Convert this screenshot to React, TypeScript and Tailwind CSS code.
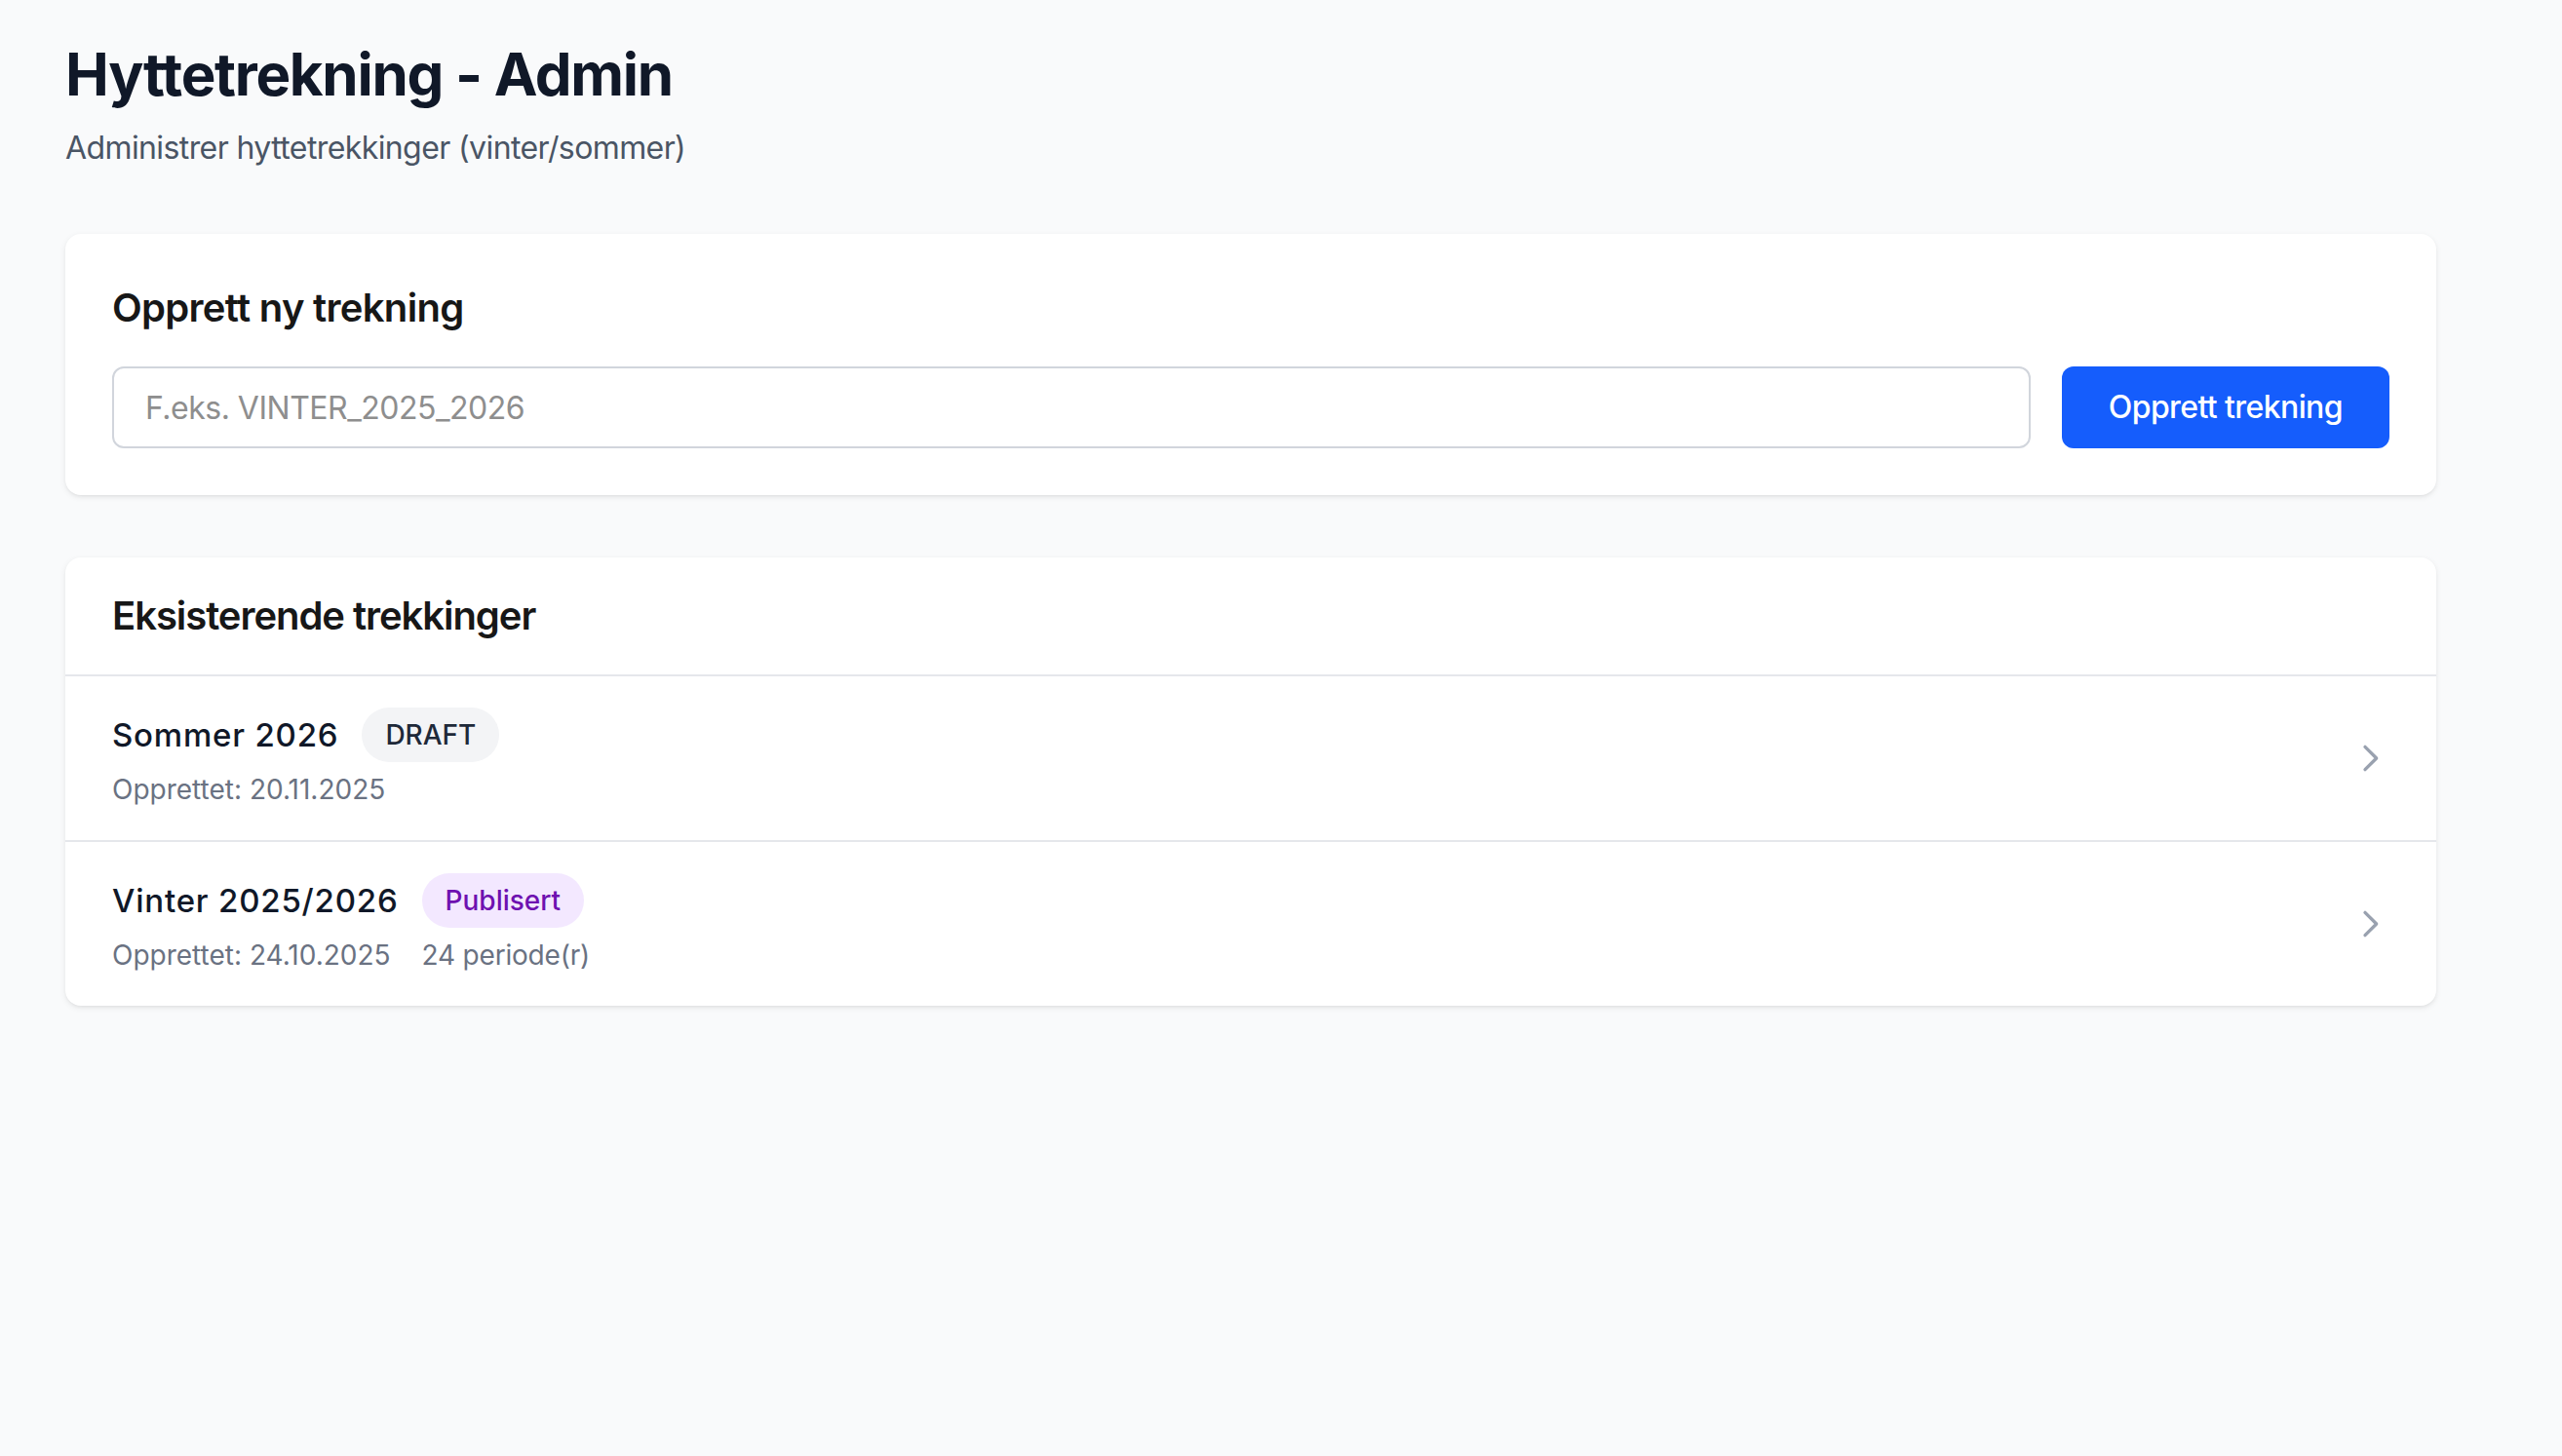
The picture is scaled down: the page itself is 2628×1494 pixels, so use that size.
import React from "react";

type Draw = {
  name: string;
  status: "DRAFT" | "Publisert";
  created: string;
  periods?: number;
};

const draws: Draw[] = [
  { name: "Sommer 2026", status: "DRAFT", created: "20.11.2025" },
  { name: "Vinter 2025/2026", status: "Publisert", created: "24.10.2025", periods: 24 },
];

function StatusBadge({ status }: { status: Draw["status"] }) {
  const tone =
    status === "Publisert"
      ? "bg-purple-100 text-purple-800"
      : "bg-gray-100 text-gray-800";
  return (
    <span
      className={`inline-flex items-center rounded-full px-[24px] py-[8px] text-[28px] leading-[40px] font-medium ${tone}`}
    >
      {status}
    </span>
  );
}

function ChevronRight() {
  return (
    <svg
      className="h-[40px] w-[40px] shrink-0 text-gray-400"
      viewBox="0 0 24 24"
      fill="none"
      stroke="currentColor"
      strokeWidth={2}
      strokeLinecap="round"
      strokeLinejoin="round"
    >
      <path d="M9 5l7 7-7 7" />
    </svg>
  );
}

function DrawRow({ draw }: { draw: Draw }) {
  return (
    <div className="flex items-center justify-between px-[48px] py-[32px]">
      <div>
        <div className="flex items-center gap-[24px]">
          <span className="text-[33px] leading-[48px] font-medium tracking-[0.8px] text-gray-900">
            {draw.name}
          </span>
          <StatusBadge status={draw.status} />
        </div>
        <div className="mt-[8px] flex gap-[32px] text-[28px] leading-[40px] text-gray-500">
          <span>Opprettet: {draw.created}</span>
          {draw.periods !== undefined && (
            <span className="tracking-[-0.2px]">{draw.periods} periode(r)</span>
          )}
        </div>
      </div>
      <ChevronRight />
    </div>
  );
}

const cardShadow =
  "shadow-[0_2px_6px_0_rgba(0,0,0,0.08),0_2px_4px_-2px_rgba(0,0,0,0.08)]";

export default function App() {
  return (
    <div
      className="min-h-screen bg-gray-50 pt-[40px] pb-[64px]"
      style={{ fontFamily: "Inter, 'Noto Sans', sans-serif" }}
    >
      <div className="ml-[67px] w-[2432px]">
        <h1 className="text-[60px] leading-[72px] font-bold tracking-[-1.3px] text-gray-900">
          Hyttetrekning - Admin
        </h1>
        <p className="mt-[16px] text-[32px] leading-[48px] tracking-[-0.6px] text-gray-600">
          Administrer hyttetrekkinger (vinter/sommer)
        </p>

        <section className={`mt-[64px] rounded-[16px] bg-white p-[48px] ${cardShadow}`}>
          <h2 className="mb-[32px] text-[40px] leading-[56px] font-semibold tracking-[-0.7px] text-neutral-900">
            Opprett ny trekning
          </h2>
          <div className="flex gap-[32px]">
            <input
              type="text"
              placeholder="F.eks. VINTER_2025_2026"
              className="h-[84px] flex-1 rounded-[12px] border-2 border-gray-300 bg-white px-[32px] text-[32px] tracking-[-0.5px] text-gray-900 outline-none placeholder:text-[#8e8e8e]"
            />
            <button className="h-[84px] rounded-[12px] bg-blue-600 px-[48px] text-[32px] font-medium tracking-[-0.6px] text-white">
              Opprett trekning
            </button>
          </div>
        </section>

        <section className={`mt-[64px] overflow-hidden rounded-[16px] bg-white ${cardShadow}`}>
          <div className="border-b-2 border-gray-200 px-[48px] py-[32px]">
            <h2 className="text-[40px] leading-[56px] font-semibold tracking-[-1.05px] text-neutral-900">
              Eksisterende trekkinger
            </h2>
          </div>
          <div className="divide-y-2 divide-gray-200">
            {draws.map((d) => (
              <DrawRow key={d.name} draw={d} />
            ))}
          </div>
        </section>
      </div>
    </div>
  );
}
